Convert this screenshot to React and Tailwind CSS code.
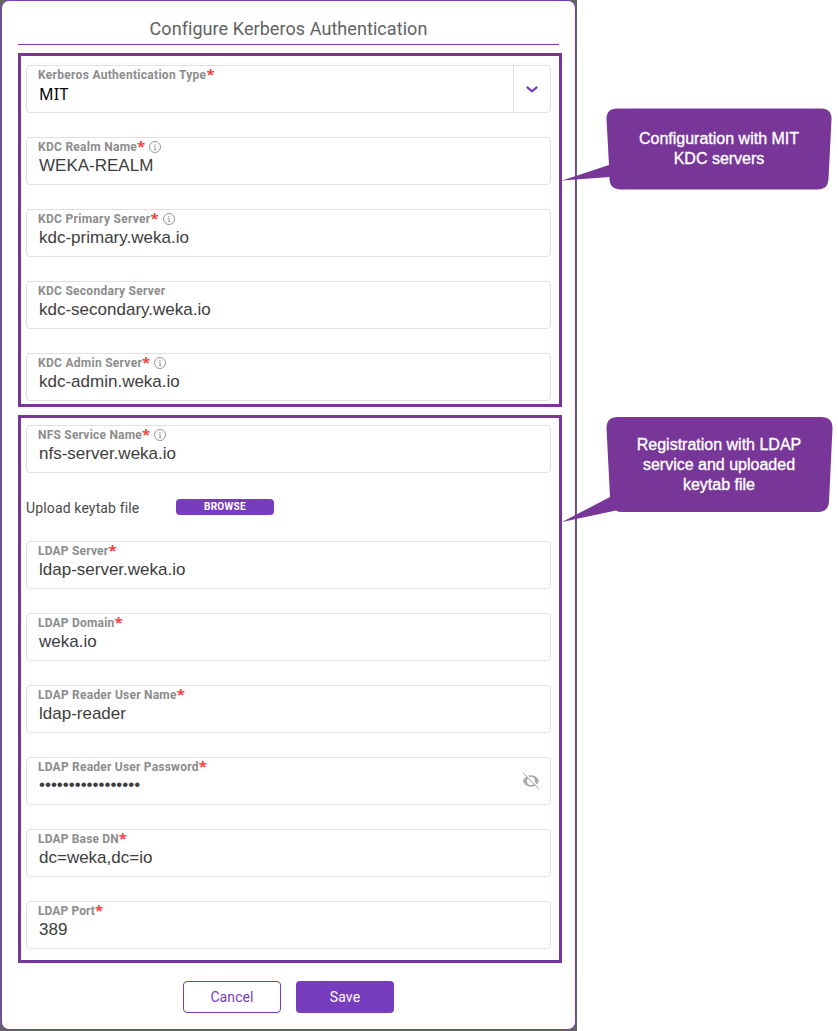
import React from "react";

const label = "font-['Roboto'] font-bold text-[12px] leading-[16px] text-[#8c8c8c]";

function InfoIcon() {
  return (
    <svg className="ml-[4px] h-3 w-3" viewBox="0 0 12 12" fill="none" stroke="#8c8c8c">
      <circle cx="6" cy="6" r="5.5" strokeWidth="0.9" />
      <path d="M4.8 5.2H6.1V8.5M4.6 8.6H7.5" strokeWidth="0.8" />
      <path d="M5.5 3.5H6.5" strokeWidth="1" />
    </svg>
  );
}

function EyeOffIcon() {
  return (
    <svg className="h-[18px] w-[18px]" viewBox="0 0 18 18" fill="none">
      <path
        fillRule="evenodd"
        fill="#adadad"
        d="M9 3.2C5 3.2 2.2 5.6 1 9c1.2 3.4 4 5.8 8 5.8s6.800-2.400 8-5.800C15.800 5.600 13 3.200 9 3.200ZM9 5.100a3.900 3.900 0 1 1 0 7.800a3.900 3.900 0 0 1 0-7.800Z"
      />
      <circle cx="9" cy="9" r="2.4" fill="#adadad" fillOpacity="0.15" />
      <path d="M2.600 1.200L17.600 16.200" stroke="#fff" strokeWidth="1.400" />
      <path d="M1.300 1.200L16.700 16.600" stroke="#a0a0a0" strokeWidth="1" />
    </svg>
  );
}

function Field({
  name,
  text,
  required = true,
  info,
  spacing = "tracking-[0.28px]",
  textClass = "mt-px font-['Liberation_Sans',Arial,sans-serif] text-[17px] text-[#3d3d3d]",
  children,
}) {
  return (
    <div className="flex h-12 rounded-[4px] border border-[#e0e0e0] bg-white">
      <div className="flex flex-1 flex-col pl-[11px] pt-px">
        <div className="flex h-4 items-center whitespace-nowrap">
          <span className={`${label} ${spacing}`}>{name}</span>
          {required && (
            <span className="h-4 w-[8px] font-['Open_Sans'] text-[15px] font-bold leading-[14px] text-[#ff3b3b]">*</span>
          )}
          {info && <InfoIcon />}
        </div>
        <div className={`ml-px leading-[20px] ${textClass}`}>{text}</div>
      </div>
      {children}
    </div>
  );
}

function Callout({ className, shape, height, children, textClass }) {
  return (
    <div className={`absolute left-[562px] w-[272px] ${className}`}>
      <svg className="block" width="272" height={height} viewBox={`0 0 272 ${height}`}>
        <path d={shape} fill="#783699" />
      </svg>
      <div
        className={`absolute left-[45px] w-[224px] text-center font-['Liberation_Sans',Arial,sans-serif] text-[16px] leading-[20px] text-white [-webkit-text-stroke:0.35px_white] ${textClass}`}
      >
        {children}
      </div>
    </div>
  );
}

export default function App() {
  return (
    <main className="relative h-[1031px] w-[838px] overflow-hidden bg-white">
      <div className="h-full w-[577px] bg-[#646464] pl-px">
        <section className="flex h-[1030px] w-[575px] flex-col rounded-[8px] border border-[#783cbe] bg-white px-4">
          <h1 className="flex h-11 w-[541px] items-center justify-center border-b border-[#783cbe] pt-[12px] font-['Roboto'] text-[18px] font-normal tracking-[0.07px] text-[#626262]">
            Configure Kerberos Authentication
          </h1>

          <div className="mt-2 mr-[-3px] flex h-[354px] flex-col gap-6 border-[3px] border-[#783699] pl-[5px] pr-2 pt-[9px]">
            <Field
              name="Kerberos Authentication Type"
              text="MIT"
              spacing="tracking-[0.3px]"
              textClass="pt-px font-['Noto_Sans'] text-[16px] tracking-[0.3px] text-black"
            >
              <div className="flex w-[37px] items-center justify-center border-l border-[#e0e0e0]">
                <svg className="h-3 w-3" viewBox="0 0 12 12" fill="none" stroke="#783cbe" strokeWidth="2.2">
                  <path d="M0.800 3.800L6 8.300L11.200 3.800" />
                </svg>
              </div>
            </Field>
            <Field name="KDC Realm Name" text="WEKA-REALM" info />
            <Field name="KDC Primary Server" text="kdc-primary.weka.io" info spacing="tracking-[0.3px]" />
            <Field name="KDC Secondary Server" text="kdc-secondary.weka.io" required={false} />
            <Field name="KDC Admin Server" text="kdc-admin.weka.io" info />
          </div>

          <div className="mt-2 mr-[-3px] flex h-[548px] flex-col border-[3px] border-[#783699] pl-[5px] pr-2 pt-[7px]">
            <Field name="NFS Service Name" text="nfs-server.weka.io" info spacing="tracking-[0.22px]" />
            <div className="flex h-[68px] items-center">
              <span className="w-[150px] pt-[2px] font-['Roboto'] text-[14px] tracking-[0.14px] text-[#4a4a4a]">
                Upload keytab file
              </span>
              <button className="h-4 w-[98px] rounded-[4px] bg-[#783cbe] font-['Roboto'] text-[10px] font-bold leading-4 tracking-[0.3px] text-white">
                BROWSE
              </button>
            </div>
            <div className="flex flex-col gap-6">
              <Field name="LDAP Server" text="ldap-server.weka.io" spacing="tracking-[0.2px]" />
              <Field name="LDAP Domain" text="weka.io" spacing="tracking-[0.2px]" />
              <Field name="LDAP Reader User Name" text="ldap-reader" spacing="tracking-[0.23px]" />
              <Field
                name="LDAP Reader User Password"
                text="•••••••••••••••••"
                spacing="tracking-[0.22px]"
                textClass="font-['Liberation_Sans',Arial,sans-serif] text-[17px] text-[#3d3d3d]"
              >
                <div className="flex w-[28px] items-center">
                  <EyeOffIcon />
                </div>
              </Field>
              <Field name="LDAP Base DN" text="dc=weka,dc=io" spacing="tracking-[0.16px]" />
              <Field name="LDAP Port" text="389" spacing="tracking-[0.1px]" />
            </div>
          </div>

          <div className="mt-[18px] flex gap-[15px] pl-[165px] font-['Roboto'] text-[14px] tracking-[0.1px]">
            <button className="h-8 w-[98px] rounded-[4px] border border-[#783cbe] text-[#783cbe]">Cancel</button>
            <button className="h-8 w-[98px] rounded-[4px] bg-[#783cbe] text-white">Save</button>
          </div>
        </section>
      </div>

      <Callout
        className="top-[108px]"
        height="84"
        textClass="top-[21px]"
        shape="M55 0.500H259Q269.500 0.500 269.500 11L266.500 71Q266 81.500 256 81.500H59Q48 81.500 47.500 71V69L0 72.500L47 57L44.500 11Q44.500 0.500 55 0.500Z"
      >
        Configuration with MIT
        <br />
        KDC servers
      </Callout>
      <Callout
        className="top-[416px]"
        height="108"
        textClass="top-[19px]"
        shape="M56 1H259Q270.500 1 270.500 12L267 86Q266 96 256 96H60Q56 96 54 94.500L0 106L48 81L44.500 12Q44.500 1 56 1Z"
      >
        Registration with LDAP
        <br />
        service and uploaded
        <br />
        keytab file
      </Callout>
    </main>
  );
}
